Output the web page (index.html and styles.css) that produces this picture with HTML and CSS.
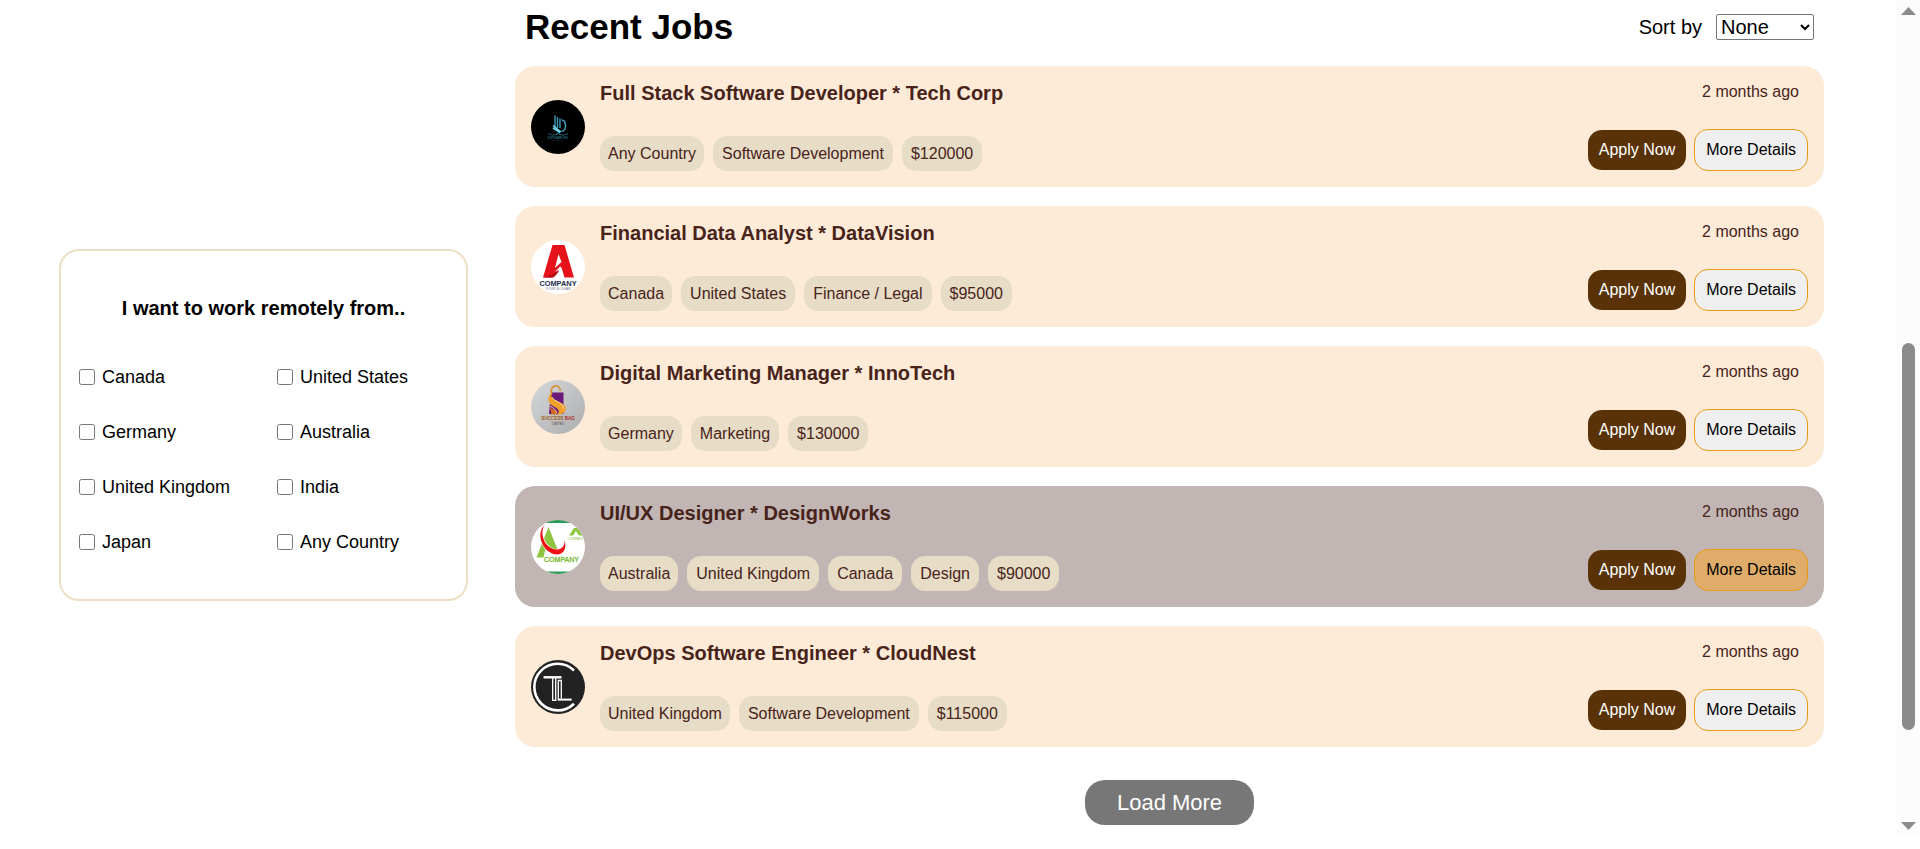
FILE: index.html
```html
<!DOCTYPE html>
<html lang="en">
<head>
<meta charset="utf-8">
<meta name="viewport" content="width=device-width, initial-scale=1">
<title>Recent Jobs</title>
<link rel="stylesheet" href="styles.css">
</head>
<body>
<div class="page">
  <main class="board">
    <aside class="filter">
      <h3 class="filter-title">I want to work remotely from..</h3>
      <div class="filter-grid">
        <label class="option"><input type="checkbox" class="check" name="country" value="ca">Canada</label>
        <label class="option"><input type="checkbox" class="check" name="country" value="us">United States</label>
        <label class="option"><input type="checkbox" class="check" name="country" value="de">Germany</label>
        <label class="option"><input type="checkbox" class="check" name="country" value="au">Australia</label>
        <label class="option"><input type="checkbox" class="check" name="country" value="uk">United Kingdom</label>
        <label class="option"><input type="checkbox" class="check" name="country" value="in">India</label>
        <label class="option"><input type="checkbox" class="check" name="country" value="jp">Japan</label>
        <label class="option"><input type="checkbox" class="check" name="country" value="any">Any Country</label>
      </div>
    </aside>

    <section class="jobs">
      <header class="jobs-header">
        <h1 class="jobs-title">Recent Jobs</h1>
        <div class="sort">
          <label for="sort">Sort by</label>
          <select id="sort" class="sort-select"><option>None</option><option>Date</option><option>Salary</option></select>
        </div>
      </header>

      <div class="job-list">
        <article class="job">
          <svg class="logo" viewBox="0 0 54 54" aria-hidden="true">
            <circle cx="27" cy="27" r="27" fill="#000"/>
            <g fill="none" stroke="#3d9dbb">
              <path d="M24 28V15.500M26.500 28V17M29 28V18.500" stroke-width="1.400"/>
              <path d="M30.500 20c5 0 5.500 11 0 11.500" stroke-width="1.500"/>
              <path d="M22 25.500l8 6.500M22 28l7 4.500" stroke="#6fd0e6" stroke-width="1.600"/>
              <path d="M17 33.500c4 2 7 2 10 0c3 2 7 2 10 0M25 35l2-2.500 2.500 2.500" stroke="#2b7c96" stroke-width=".8"/>
            </g>
            <text x="27" y="39" class="mark" font-size="2.600" fill="#3a93ae">SOFTWARE DEV</text>
            <path d="M22 40.700h2m2 0h2m2 0h2" stroke="#1d4a5a" stroke-width=".6"/>
          </svg>
          <div class="job-main">
            <h2 class="job-title">Full Stack Software Developer * Tech Corp</h2>
            <ul class="tags"><li class="tag">Any Country</li><li class="tag">Software Development</li><li class="tag">$120000</li></ul>
          </div>
          <div class="job-side">
            <span class="date">2 months ago</span>
            <div class="actions"><button class="btn apply">Apply Now</button><button class="btn details">More Details</button></div>
          </div>
        </article>

        <article class="job">
          <svg class="logo" viewBox="0 0 54 54" aria-hidden="true">
            <circle cx="27" cy="27" r="27" fill="#fff"/>
            <path d="M21.500 5h12L43 37.500h-9.500l-3-10-6 3.500-2 6.500H12z" fill="#e5121a"/>
            <path d="M27.500 14l-3.500 14 6.500-6z" fill="#fff"/>
            <path d="M12 37.500c7-1 12-4 18-12l-3 7c-2 3-4 5-7 5z" fill="#b50d14"/>
            <path d="M29.500 26l-5 5.500 5.500-2z" fill="#fff"/>
            <text x="27" y="45.500" class="mark bold" font-size="7.400" fill="#1d2c52">COMPANY</text>
            <text x="27" y="49.500" class="mark" font-size="3.400" fill="#6b7488">YOUR SLOGAN</text>
          </svg>
          <div class="job-main">
            <h2 class="job-title">Financial Data Analyst * DataVision</h2>
            <ul class="tags"><li class="tag">Canada</li><li class="tag">United States</li><li class="tag">Finance / Legal</li><li class="tag">$95000</li></ul>
          </div>
          <div class="job-side">
            <span class="date">2 months ago</span>
            <div class="actions"><button class="btn apply">Apply Now</button><button class="btn details">More Details</button></div>
          </div>
        </article>

        <article class="job">
          <svg class="logo" viewBox="0 0 54 54" aria-hidden="true">
            <defs><linearGradient id="silver" x1="0" y1="0" x2="1" y2="1"><stop offset="0" stop-color="#d6d7d9"/><stop offset="1" stop-color="#acadaf"/></linearGradient></defs>
            <circle cx="27" cy="27" r="27" fill="url(#silver)"/>
            <path d="M20 12.500h12.500V34H18z" fill="#6b1a78"/>
            <path d="M20.500 15c-2-11 8-12 9-4" fill="none" stroke="#d98f30" stroke-width="1.600"/>
            <path d="M21 12c-5 9 13 9 14 16c0 4-4 7-9 7c4-5 0-7-4-9c-6-3-6-10-1-14z" fill="#eea02a"/>
            <path d="M18 25c1 6 9 3 8 9.500h-7c3-2 0-5-1-9.500z" fill="#d86a25"/>
            <path d="M21 17c2 5 10 4 12 12M19 26c3 2 6 3 6.500 7" fill="none" stroke="#f6dfae" stroke-width=".9"/>
            <text x="27" y="40" class="mark bold" font-size="4.600" fill="#9a5b1d">SUCCESS <tspan fill="#b02a25">BAG</tspan></text>
            <path d="M19 41.700h16" stroke="#a88f79" stroke-width=".4"/>
            <text x="27" y="45.300" class="mark" font-size="3" fill="#444">LIMITED</text>
          </svg>
          <div class="job-main">
            <h2 class="job-title">Digital Marketing Manager * InnoTech</h2>
            <ul class="tags"><li class="tag">Germany</li><li class="tag">Marketing</li><li class="tag">$130000</li></ul>
          </div>
          <div class="job-side">
            <span class="date">2 months ago</span>
            <div class="actions"><button class="btn apply">Apply Now</button><button class="btn details">More Details</button></div>
          </div>
        </article>

        <article class="job job-active">
          <svg class="logo" viewBox="0 0 54 54" aria-hidden="true">
            <defs><clipPath id="disc"><circle cx="27" cy="27" r="27"/></clipPath></defs>
            <g clip-path="url(#disc)">
              <path d="M0 0h54v54H0z" fill="#fff"/>
              <path d="M0 0h54v3H0zM0 51.500h54V54H0z" fill="#2f9a55"/>
              <path d="M17.500 7L27.500 32H20L15.500 24 12.500 37.500H5.500z" fill="#8dc63f"/>
              <path d="M13.500 5C8 14 14 30 27 30C33 29 34.500 25 33.500 20C36 28 33 34.500 27 34.500C12 34 4 14 13.500 5z" fill="#fff" stroke="#fff" stroke-width="1.500"/>
              <path d="M13.500 5C8 14 14 29 26 29.500C32 29 34 25 33.500 20C36 28 33 34.500 26 34.500C12 34 4 14 13.500 5z" fill="#ee1218"/>
              <path d="M38 15.500l5-7.500h4l5 7.500h-4l-3-4.500-3 4.500z" fill="#8dc63f"/>
              <text x="44.500" y="20" class="mark" font-size="3.200" fill="#8dc63f">COMPANY</text>
              <text x="30.500" y="42" class="mark" font-size="7" stroke="#79b933" stroke-width=".3" fill="#79b933">COMPANY</text>
            </g>
          </svg>
          <div class="job-main">
            <h2 class="job-title">UI/UX Designer * DesignWorks</h2>
            <ul class="tags"><li class="tag">Australia</li><li class="tag">United Kingdom</li><li class="tag">Canada</li><li class="tag">Design</li><li class="tag">$90000</li></ul>
          </div>
          <div class="job-side">
            <span class="date">2 months ago</span>
            <div class="actions"><button class="btn apply">Apply Now</button><button class="btn details">More Details</button></div>
          </div>
        </article>

        <article class="job">
          <svg class="logo" viewBox="0 0 54 54" aria-hidden="true">
            <circle cx="27" cy="27" r="27" fill="#222"/>
            <g fill="none" stroke="#fff">
              <path d="M43 10.500A23.300 23.300 0 1 0 43 43.700" stroke-width="2.600"/>
              <path d="M12.500 17.300h18" stroke-width="2.400"/>
              <path d="M21.700 18v22.800M24.700 18v22.800M21 40.300h4.500" stroke-width="1.300"/>
              <path d="M27.300 20v20.300M30.300 20v18.500M26.700 20.500h4.200" stroke-width="1.300"/>
              <path d="M27 39.600h13.700" stroke-width="2"/>
            </g>
          </svg>
          <div class="job-main">
            <h2 class="job-title">DevOps Software Engineer * CloudNest</h2>
            <ul class="tags"><li class="tag">United Kingdom</li><li class="tag">Software Development</li><li class="tag">$115000</li></ul>
          </div>
          <div class="job-side">
            <span class="date">2 months ago</span>
            <div class="actions"><button class="btn apply">Apply Now</button><button class="btn details">More Details</button></div>
          </div>
        </article>
      </div>

      <button class="load-more">Load More</button>
    </section>
  </main>

  <div class="scrollbar" aria-hidden="true">
    <svg class="arrow" viewBox="0 0 15 8"><path d="M7.500 0L15 8H0z" fill="#8b8b8b"/></svg>
    <div class="track-before"></div>
    <div class="thumb"></div>
    <div class="track-after"></div>
    <svg class="arrow" viewBox="0 0 15 8"><path d="M0 0h15L7.500 8z" fill="#8b8b8b"/></svg>
  </div>
</div>
</body>
</html>
```
FILE: styles.css
```css
* {
  box-sizing: border-box;
}

body {
  margin: 0;
  background: #fff;
  color: #000;
  font-family: "Liberation Sans", Arial, sans-serif;
  font-size: 16px;
}

h1, h2, h3, ul {
  margin: 0;
  padding: 0;
}

button, select {
  font-family: inherit;
}

.page {
  display: flex;
  min-height: 100vh;
}

.board {
  flex: 1;
  display: grid;
  grid-template-columns: 5fr 16fr;
  column-gap: 47px;
  align-items: center;
  padding: 0 73px 0 59px;
}

/* Country filter */
.filter {
  padding: 45px 18px;
  border: 2px solid #ecdfc4;
  border-radius: 20px;
}

.filter-title {
  margin-bottom: 45px;
  font-size: 20px;
  line-height: 24px;
  text-align: center;
}

.filter-grid {
  display: grid;
  grid-template-columns: 1fr 1fr;
  gap: 31px 27px;
}

.option {
  display: flex;
  align-items: center;
  gap: 7px;
  font-size: 18px;
  line-height: 24px;
}

.check {
  width: 16px;
  height: 16px;
  margin: 0;
}

/* Job list */
.jobs {
  align-self: start;
  display: flex;
  flex-direction: column;
}

.jobs-header {
  display: flex;
  justify-content: space-between;
  align-items: center;
  height: 54px;
  margin-bottom: 12px;
  padding: 0 10px;
}

.jobs-title {
  font-size: 35px;
  line-height: 40px;
}

.sort {
  display: flex;
  align-items: center;
  gap: 14px;
  font-size: 20px;
}

.sort-select {
  width: 98px;
  height: 26px;
  border: 1px solid #767676;
  border-radius: 2px;
  background-color: #fff;
  color: #000;
  font-size: 20px;
}

.job-list {
  display: flex;
  flex-direction: column;
  gap: 19px;
}

.job {
  display: flex;
  align-items: center;
  gap: 15px;
  padding: 16px;
  border-radius: 20px;
  background: #fdebd8;
  color: #48231a;
}

.job-active {
  background: #c1b6b3;
}

.logo {
  flex: none;
  width: 54px;
  height: 54px;
}

.mark {
  font-family: "Liberation Sans", Arial, sans-serif;
  text-anchor: middle;
}

.bold {
  font-weight: 700;
}

.job-main {
  flex: 1;
}

.job-title {
  margin-bottom: 32px;
  font-size: 20px;
  line-height: 22px;
}

.tags {
  display: flex;
  flex-wrap: wrap;
  gap: 9px;
  list-style: none;
}

.tag {
  padding: 0 8px;
  border-radius: 14px;
  background: #e7dcc6;
  line-height: 35px;
}

.tag + .tag {
  padding: 0 9px;
}

.job-side {
  display: flex;
  flex-direction: column;
  align-items: flex-end;
  gap: 28px;
}

.date {
  padding-right: 9px;
  line-height: 19px;
}

.actions {
  display: flex;
  align-items: center;
  gap: 8px;
}

.btn {
  height: 40px;
  padding: 0 11px;
  border: 0;
  border-radius: 14px;
  font-size: 16px;
}

.apply {
  background: #593307;
  color: #fff;
}

.details {
  height: 42px;
  border: 1px solid #e69a17;
  background: #efefef;
  color: #000;
}

.job-active .details {
  background: #dfac6a;
}

.load-more {
  align-self: center;
  height: 45px;
  margin-top: 33px;
  padding: 0 32px;
  border: 0;
  border-radius: 20px;
  background: #777;
  color: #fff;
  font-size: 22px;
}

/* Scroll rail */
.scrollbar {
  display: flex;
  flex-direction: column;
  align-items: center;
  width: 23px;
  height: calc(100vh - 14px);
  padding: 7px 0 5px;
  background: #fcfcfc;
}

.arrow {
  flex: none;
  width: 15px;
  height: 8px;
}

.track-before {
  flex: 328;
}

.thumb {
  flex: 387;
  width: 13px;
  border-radius: 7px;
  background: #8b8b8b;
}

.track-after {
  flex: 92;
}
```
